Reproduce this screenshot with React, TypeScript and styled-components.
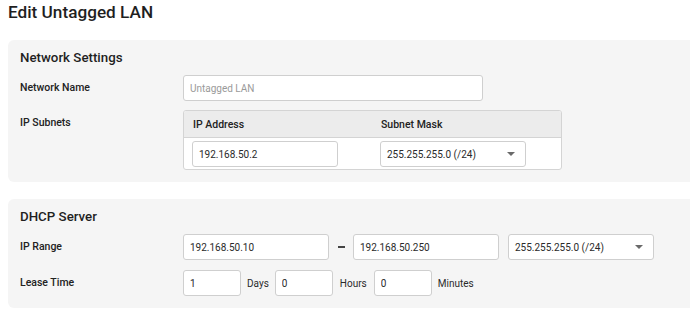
import React from "react";
import styled, { createGlobalStyle } from "styled-components";

const Global = createGlobalStyle`
  html, body { margin: 0; padding: 0; background: #fff; }
  body { font-family: Roboto, "Noto Sans", sans-serif; color: #222; }
  * { box-sizing: border-box; }
`;

const Page = styled.div`
  padding: 0 0 0 8px;
  display: flex;
  flex-direction: column;
`;

const Title = styled.h1`
  margin: 0;
  height: 40px;
  padding-top: 1px;
  font-size: 17.2px;
  font-weight: 500;
  line-height: 22px;
  color: #1f1f1f;
`;

const Panel = styled.section<{ $mb?: number }>`
  background: #f5f5f5;
  border-radius: 6px 0 0 6px;
  padding: 9px 12px 12px 12px;
  margin-bottom: ${(p) => p.$mb ?? 0}px;
`;

const PanelTitle = styled.h2`
  margin: 0 0 8px 0;
  font-size: 13.3px;
  font-weight: 500;
  line-height: 18px;
  color: #1f1f1f;
`;

const Rows = styled.div<{ $gap: number }>`
  display: flex;
  flex-direction: column;
  gap: ${(p) => p.$gap}px;
`;

const Row = styled.div`
  display: grid;
  grid-template-columns: 163px 1fr;
  align-items: start;
`;

const Label = styled.div`
  font-size: 10.5px;
  font-weight: 500;
  line-height: 26px;
  color: #222;
`;

const Field = styled.div`
  display: flex;
  align-items: center;
`;

const Input = styled.input<{ $w: number }>`
  width: ${(p) => p.$w}px;
  height: 26px;
  border: 1px solid #cfcfcf;
  border-radius: 3px;
  background: #fff;
  padding: 0 6px;
  font-family: Roboto, "Noto Sans", sans-serif;
  font-size: 10px;
  color: #2a2a2a;
  outline: none;
  &::placeholder { color: #9a9a9a; }
`;

const SelectBox = styled.div<{ $w: number }>`
  width: ${(p) => p.$w}px;
  height: 26px;
  border: 1px solid #cfcfcf;
  border-radius: 3px;
  background: #fff;
  padding: 0 10px 0 6px;
  display: flex;
  align-items: center;
  justify-content: space-between;
  font-size: 10px;
  color: #2a2a2a;
`;

const Caret = styled.span`
  width: 0;
  height: 0;
  border-left: 4px solid transparent;
  border-right: 4px solid transparent;
  border-top: 4px solid #6a6a6a;
`;

const Table = styled.div`
  width: 379px;
  border: 1px solid #d4d4d4;
  border-radius: 3px;
  background: #fff;
  overflow: hidden;
`;

const THead = styled.div`
  display: grid;
  grid-template-columns: 188px 1fr;
  height: 27px;
  background: #ececec;
  border-bottom: 1px solid #d4d4d4;
  align-items: center;
`;

const Th = styled.div`
  padding-left: 9px;
  font-size: 10.5px;
  font-weight: 500;
  color: #222;
`;

const TRow = styled.div`
  display: grid;
  grid-template-columns: 188px 1fr;
  padding: 3px 0 2px 0;
  align-items: center;
`;

const Td = styled.div`
  padding-left: 8px;
`;

const Dash = styled.span`
  width: 24px;
  display: flex;
  justify-content: center;
  &::before {
    content: "";
    width: 7px;
    height: 2px;
    background: #444;
  }
`;

const Unit = styled.span<{ $ml: number; $mr: number }>`
  font-size: 10px;
  color: #2a2a2a;
  margin: 0 ${(p) => p.$mr}px 0 ${(p) => p.$ml}px;
`;

const Spacer = styled.span<{ $w: number }>`
  width: ${(p) => p.$w}px;
`;

export default function App() {
  return (
    <>
      <Global />
      <Page>
        <Title>Edit Untagged LAN</Title>
        <Panel $mb={17}>
          <PanelTitle>Network Settings</PanelTitle>
          <Rows $gap={9}>
            <Row>
              <Label>Network Name</Label>
              <Field>
                <Input $w={300} placeholder="Untagged LAN" />
              </Field>
            </Row>
            <Row>
              <Label>IP Subnets</Label>
              <Table>
                <THead>
                  <Th>IP Address</Th>
                  <Th>Subnet Mask</Th>
                </THead>
                <TRow>
                  <Td>
                    <Input $w={146} defaultValue="192.168.50.2" />
                  </Td>
                  <Td>
                    <SelectBox $w={146}>
                      255.255.255.0 (/24)
                      <Caret />
                    </SelectBox>
                  </Td>
                </TRow>
              </Table>
            </Row>
          </Rows>
        </Panel>
        <Panel>
          <PanelTitle>DHCP Server</PanelTitle>
          <Rows $gap={10}>
            <Row>
              <Label>IP Range</Label>
              <Field>
                <Input $w={146} defaultValue="192.168.50.10" />
                <Dash />
                <Input $w={146} defaultValue="192.168.50.250" />
                <Spacer $w={9} />
                <SelectBox $w={146}>
                  255.255.255.0 (/24)
                  <Caret />
                </SelectBox>
              </Field>
            </Row>
            <Row>
              <Label>Lease Time</Label>
              <Field>
                <Input $w={58} defaultValue="1" />
                <Unit $ml={6} $mr={6}>Days</Unit>
                <Input $w={58} defaultValue="0" />
                <Unit $ml={7} $mr={7}>Hours</Unit>
                <Input $w={58} defaultValue="0" />
                <Unit $ml={6} $mr={0}>Minutes</Unit>
              </Field>
            </Row>
          </Rows>
        </Panel>
      </Page>
    </>
  );
}
